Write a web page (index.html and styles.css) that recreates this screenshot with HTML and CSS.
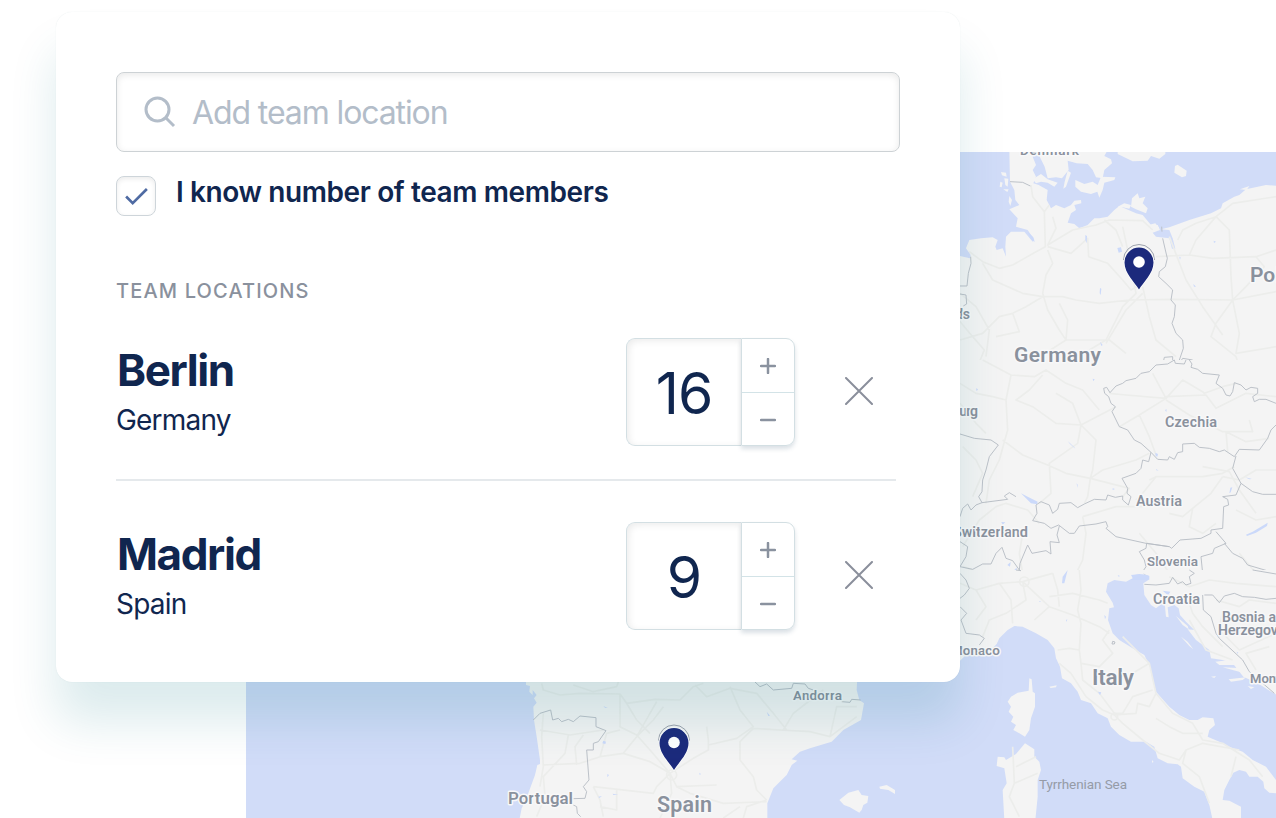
FILE: index.html
```html
<!DOCTYPE html>
<html lang="en">
<head>
<meta charset="utf-8">
<title>Team locations</title>
<link rel="stylesheet" href="styles.css">
</head>
<body>
<main class="stage">
  <svg class="map" viewBox="246 152 1030 666" role="img" aria-label="Map of Europe">
    <!-- North: Denmark, Germany, Poland -->
    <g transform="translate(956 150) scale(.33333)">
      <g class="land">
        <path d="M160 0L162 95L175 120L178 150L190 165L160 178L185 205L180 230L215 240L235 270L230 275L205 245L165 245L150 260L148 290L150 320L140 295L122 300L118 290L125 270L110 262L75 265L40 270L30 295L44 315L42 325L12 318L0 318V670H970V108L930 105L870 118L850 135L835 140L800 160L795 175L765 190L700 210L640 232L615 238L640 240L650 265L658 296L648 296L640 265L600 260L590 248L612 240L605 225L585 225L560 195L540 190L490 168L475 180L455 200L430 205L415 205L395 225L370 235L355 222L335 218L345 190L360 180L355 165L376 160L375 150L355 152L345 165L325 175L300 165L285 175L272 150L275 120L248 105L232 100L240 80L230 60L240 45L230 20L238 0Z"/>
        <path d="M245 0L252 22L266 50L275 85L300 82L318 85L338 60L335 32L362 40L395 42L410 60L420 82L440 85L445 60L468 40L465 28L445 18L455 0Z"/>
        <path d="M230 88L255 72L275 88L305 98L295 110L275 98L255 95L240 100ZM335 62L345 68L330 110L322 116L326 95ZM358 90L385 102L410 95L425 105L435 80L478 82L475 90L445 98L440 120L430 143L424 125L405 132L375 125L358 110ZM657 48L665 44L692 62L690 78L678 82L655 68ZM485 12L530 34L575 32L585 18L610 26L628 12V0H485ZM528 145L545 130L550 145L568 140L560 160L575 175L570 190L540 178L525 170ZM485 170L505 160L525 165L520 176L500 172ZM135 66L150 68L152 80L138 76ZM145 85L157 86L155 110L148 105ZM133 95L140 98L137 112L131 110ZM142 118L158 118L154 126ZM160 138L168 150L163 168L158 155ZM580 224L598 220L610 235L595 240ZM852 118L880 108L872 120Z"/>
      </g>
      <g class="road">
        <path d="M225 105L230 140L265 185L268 290L232 310L170 345L130 355L80 335L40 305M265 185L280 165M290 200L300 235L275 285L350 240L420 225L460 210L560 212L590 240M275 290L345 310L395 265L398 320L455 340L500 390L525 420L560 400M275 300L290 340L270 375L260 430L275 480L310 540L330 570L460 570L510 610M80 340L110 390L200 430L260 440L320 440L360 450L430 460L520 450L650 448L830 450L960 425M260 440L210 470L170 490L130 500L80 550L12 570M170 490L190 545L120 560M12 430L60 470L100 540L90 620M445 210L480 240L500 290M500 230L515 300L540 430L500 470L450 570L400 600M560 410L580 500L600 570L660 620M600 320L700 315L770 325L900 320L960 300M665 270L680 240L720 220L780 200L830 160L960 140M780 200L820 240L825 380L830 450L780 520L765 560L840 620L850 650M640 260L690 390L740 470L800 555M700 315L720 270L780 200M900 320L925 350L870 410L830 450M830 450L850 550L840 610L960 590M0 500L50 560L85 600L60 660M310 460L335 510L330 570L220 640M560 430L510 480L450 580"/>
      </g>
      <g class="border">
        <path d="M162 95L200 97L223 108M617 230L618 245M620 265L628 300L634 325L628 350L610 365L608 380L630 400L650 420L645 450L658 465L655 500L648 520L660 550L680 570L682 595L665 645M12 408L33 408L37 370L45 340L44 320M12 432L30 435L32 462L22 468M580 660L620 645L625 622L650 620L650 640L670 640L680 625L710 630L720 650L750 660"/>
      </g>
      <g class="water"><path d="M484 294L495 292L498 305L488 308ZM388 255L393 258L392 280L388 270ZM432 414L436 416L434 435L431 430ZM773 272L780 275L774 279ZM670 320L674 322L672 330ZM712 402L720 410L714 410ZM432 575L440 585L436 588ZM215 245L232 262L236 276L225 268Z"/></g>
    </g>
    <!-- Middle: Alps, Czechia, Austria -->
    <g transform="translate(956 360) scale(.33333)">
      <path class="land" d="M0 0H970V660H0Z"/>
      <g class="road">
        <path d="M80 0L165 45L150 120L155 210L130 300L100 360L90 430M165 45L235 50L270 30L330 70L380 90L430 150M260 45L220 90L180 120L230 140L300 190L375 195L480 140M300 100L350 130L375 195L420 240L410 330L403 355L330 340L275 315L200 285L140 240M375 195L365 250L280 310L285 400L250 430M403 355L440 330L540 300L580 280M403 355L520 385L500 410M403 355L395 410L385 430M460 100L510 105L630 115L680 60L740 95L745 100L800 80L840 70M630 115L550 165L490 200M630 115L590 40M630 120L700 165L800 215L890 215L880 180M810 215L815 275M630 110L750 105L780 145L870 100L960 110M550 165L580 230L600 285M810 215L870 245L940 235M580 360L600 350L740 350L800 340L835 320M800 350L765 400L710 445L680 470L640 460M710 445L700 500L740 520L780 490M800 350L850 360L900 330L960 330M600 350L560 400L540 420M380 470L390 520L380 600L350 660M380 470L480 440L560 440M12 70L60 100L110 110L150 120M20 260L60 300L80 340L50 410M120 440L150 430L215 450L250 490M120 440L70 480L20 560M200 520L190 580L200 640M12 130L60 190L90 220M550 520L600 580L640 640L660 660M850 580L900 640M840 450L900 480L960 470M740 320L820 335L850 390L900 460M20 620L80 640L140 650L240 640"/>
      </g>
      <g class="border">
        <path d="M655 0L635 12L600 15L580 35L555 40L540 55L510 62L500 70L480 78L462 98L452 82L443 85L446 100L458 110L465 130L478 140L468 155L490 200L515 210L535 240L555 250L585 277L605 298L635 300L640 290L655 298L665 278L680 275L680 252L715 250L730 262L760 265L790 275L805 270L835 290L850 268L910 270L935 235L945 210L960 195M585 277L578 305L560 300L555 325L540 340L498 355L515 385L513 400L525 410L517 435L500 420L500 408L478 412L455 405L450 420L415 418L385 432L365 443L345 428L310 430L305 448L290 460L280 435L255 425L240 435L243 460L230 482L265 490L285 505L308 495L340 520L355 520L370 498L420 492L450 485L455 500L450 505L480 530L570 550L640 560L647 565L672 540L735 535L765 520L765 510L800 505L803 440L818 435L815 418L800 410L840 405L855 370L830 325L840 288M855 370L890 395L920 403H960M12 222L55 235L105 240L127 255L100 290L90 330L80 360L78 395L68 410L78 428L60 435L45 450L35 432L20 445L12 470M78 428L155 418L145 408L160 398L180 410M12 545L35 560L30 590L12 620L50 628L80 612L105 612L120 580L138 562L150 595L170 602L190 630L192 610L215 555L228 580L270 572L285 582L282 545L310 548L303 525L310 498M572 550L570 565L550 575L565 600L570 620L560 635L580 660M572 550L640 560M700 660L715 635L740 640L735 590L770 580L775 565L810 550L780 515M805 550L830 580L860 595L875 615L960 640M700 0L708 12L705 22L725 28L740 40L790 45L780 70L800 85L810 105L822 108L830 95L835 68L855 75L870 90L885 82L905 85L905 100L890 110L895 125L910 118L930 118L960 130M655 0L658 10L685 12L690 0"/>
      </g>
      <g class="water"><path d="M195 400L215 410L245 425L243 433L225 430L210 415ZM870 524L890 515L935 488L933 498L900 518L873 528ZM820 400L823 383L829 382L824 397ZM868 352L888 357L880 358ZM318 655L330 635L336 634L325 660H318ZM508 660L520 645L550 642L580 645V660ZM335 243L355 262L358 266L342 252ZM598 278L606 282L604 290L599 288ZM136 486L148 487L140 494ZM470 385L477 387L470 390ZM600 327L608 332L601 331ZM627 150L632 148L631 156ZM60 85L66 88L62 94ZM154 615L164 606L162 620ZM175 630L183 622L180 634ZM410 56L416 58L412 64ZM362 370L365 374L364 384Z"/></g>
    </g>
    <!-- South: Italy and the Adriatic -->
    <g transform="translate(956 570) scale(.33333)">
      <path class="sea" d="M0 30H970V750H0Z"/>
      <path class="land" d="M0 0V290L12 272L30 255L100 245L122 222L130 205L155 180L175 168L200 170L240 190L275 210L295 235L300 265L312 290L318 325L345 340L365 365L375 390L405 400L425 430L455 445L465 470L490 495L525 515L570 515L595 530L605 565L635 580L665 583L675 590L680 625L715 650L745 665L760 705L770 750L855 750V710L820 692L800 690L805 660L820 630L832 608L850 600L870 605L880 620L905 620L922 635L925 655L940 668L960 670V630L930 590L890 570L860 545L820 530L790 515L755 500L760 480L777 465L772 445L740 442L725 450L700 450L670 435L640 410L600 365L590 330L582 290L565 255L530 235L490 210L470 190L456 150L460 115L474 112L470 98L450 65L455 40L475 30L510 35L530 25L525 14L560 10L590 22L562 40L565 75L585 105L600 115L625 95L627 110L630 140L638 142L635 112L655 105L668 115L672 135L690 155L715 180L695 178L720 210L760 240L765 265L800 270L830 280L862 320L905 340L970 380V0Z"/>
      <path class="land" d="M220 325L227 328L230 365L237 370V410L225 445L220 480L207 500L190 490L172 480L180 465L165 455L172 440L158 425L165 410L155 395L165 380L185 368L218 362Z"/>
      <path class="land" d="M207 520L235 538L235 560L250 575L255 600L245 630L245 680L238 750H145L140 660L152 640L145 595L122 588L125 560L145 562L150 570L180 552Z"/>
      <path class="land" d="M280 350L302 346L300 352L284 354ZM675 200L695 215L712 238L700 228ZM660 138L695 168L698 178L680 165ZM778 275L820 270L840 285L790 285ZM800 292L860 295L875 312L830 300ZM818 328L870 322L860 330L825 335ZM765 320L780 318L775 324ZM875 348L895 352L885 357ZM588 570L593 576L588 578Z"/>
      <g class="road">
        <path d="M12 40L60 60L130 40L200 35L290 10M130 40L165 90L170 160M200 35L280 110L350 135L430 170L460 190M200 35L210 90L150 130L100 150L80 200M290 10L305 60L310 110M370 0L375 60L365 120L375 160L370 240L340 235L305 240M280 80L350 70L430 90L455 100M370 240L375 280L430 290L470 250L440 210L460 180M375 280L380 330L430 370L475 430L500 430L530 380L590 360M310 280L345 310L390 380L440 420L475 435L500 460L560 510L610 550L670 570L690 540L740 520L850 540M475 435L540 430L545 400L580 410L600 370M580 280L600 370L650 430L710 460L740 510L800 520L880 570L920 620M690 540L680 580L730 620L760 700M840 560L825 620M600 445L640 470L680 490L740 490M500 200L580 280L530 310M170 530L175 640L160 680L190 740M240 560L180 590M245 610L175 640M235 150L280 110M60 60L90 110L60 150M640 20L700 50L760 30L840 40L960 50M690 70L710 130L740 170L800 230M780 90L850 110L880 90L960 100M800 120L790 180L850 240L960 190M900 300L870 250L940 230M700 150L750 240L830 270"/>
        <circle cx="205" cy="35" r="14"/><circle cx="475" cy="440" r="10"/>
      </g>
      <g class="border">
        <path d="M12 10L30 30L40 55L25 75L12 85M12 110L32 130L15 150L30 190L70 195L85 205L70 225M565 43L600 45L640 40L650 22L665 42L680 35L690 45L705 40L700 20L715 10L700 0M740 75L742 120L765 140L780 190L790 205L860 270L880 305L955 370M745 75L770 75L790 98L805 78L835 70L860 80L895 82L930 88L960 85M890 0L960 12M468 222L470 214L477 216L475 222ZM180 0L195 2"/>
      </g>
      <g class="water"><path d="M318 40L320 20L335 0L325 40ZM445 135L450 140L447 148ZM426 365L436 367L432 376ZM250 93L256 94L250 96ZM330 150L334 148L331 156ZM485 15L492 18L488 20ZM620 62L643 65L636 76ZM842 245L847 248L844 251Z"/></g>
    </g>
    <!-- Iberia -->
    <g transform="translate(490 670) scale(.33333)">
      <path class="land" d="M108 0V45L120 48L118 65L128 75V60L140 75L132 85L140 98L130 110L132 150L140 200L150 270L150 282L142 285L135 315L115 370L105 395L95 415L88 450H832V400L850 355L890 315L905 285L922 272L905 268L930 245L960 235L1025 215L1060 180L1113 150L1122 100L1108 90L1100 60L1103 0Z"/>
      <path class="land" d="M1048 390L1075 368L1105 360L1115 375L1135 378L1132 398L1120 405L1115 420L1108 428L1080 412L1062 405ZM1168 350L1190 345L1215 360V372L1195 360L1170 356Z"/>
      <g class="road">
        <path d="M155 40L160 60L210 75L270 70L390 72L410 100L495 88L570 90L610 50L640 40M250 45L310 65L380 50L385 36M390 72L390 170L440 195L480 240L540 310L500 350L490 370L310 350M410 100L440 150L480 190M390 180L350 190L330 260L270 280L160 285M150 180L240 195L340 180M235 195L225 250L160 320L165 380L140 440M160 130L155 200L160 290L150 350M260 285L255 230L280 195M330 260L400 250L480 275L540 310M440 200L490 150L520 110M500 95L440 200L400 250M540 310L610 265L655 240L655 210L650 170M655 225L740 205L790 170L750 120L720 50M720 55L650 80L615 45M790 175L750 215L750 270L790 320L800 360L830 390M790 175L870 180L960 185L1020 200L1100 140M880 180L910 130L1000 60M540 310L560 350L600 370L700 400L830 395M560 350L680 345M540 310L545 370L510 444M330 410L380 420L380 360M720 55L800 70L850 130L890 180M1020 200L1040 110L1100 110M750 410L700 444M830 390L770 410L760 444M340 440L330 390L310 350"/>
        <circle cx="545" cy="315" r="15"/>
      </g>
      <g class="border">
        <path d="M130 150L150 130L182 120L188 150L205 145L215 155L235 148L250 155L270 138L318 143L318 170L348 182L325 215L310 220L310 240L290 240L297 330L280 350L290 365L285 385L250 386M250 405L260 410L262 430L272 440M795 36L810 50L830 42L850 60L905 55L910 40L945 42L955 55L970 60M1055 95L1080 97L1085 88L1112 90"/>
      </g>
      <g class="water"><path d="M340 212L348 215L346 222L337 220ZM830 125L840 137L835 138ZM352 312L357 315L352 322ZM368 371L385 374L370 375ZM628 308L633 312L629 315ZM340 108L353 114L345 113ZM325 380L336 378L328 384Z"/></g>
    </g>

    <g class="label">
      <text x="1020" y="154.500" font-size="13.500" textLength="59">Denmark</text>
      <text x="1014" y="362" font-size="21" textLength="87">Germany</text>
      <text x="1250" y="282" font-size="21">Poland</text>
      <text x="948" y="319" font-size="14" textLength="22">nds</text>
      <text x="922" y="416" font-size="14" textLength="56">xembourg</text>
      <text x="1165" y="427" font-size="14.500" textLength="52">Czechia</text>
      <text x="1136" y="506" font-size="14.500" textLength="46">Austria</text>
      <text x="953" y="537" font-size="14.500" textLength="75">Switzerland</text>
      <text x="1147" y="566" font-size="13.500" textLength="51">Slovenia</text>
      <text x="1153" y="604" font-size="14.500" textLength="47">Croatia</text>
      <text font-size="14"><tspan x="1222" y="622">Bosnia and</tspan><tspan x="1218" y="635">Herzegovina</tspan></text>
      <text x="951" y="655" font-size="13.500" textLength="49">Monaco</text>
      <text x="1092" y="685" font-size="22.500" textLength="42">Italy</text>
      <text x="1250" y="683" font-size="13">Montenegro</text>
      <text x="793" y="700" font-size="13.500" textLength="49">Andorra</text>
      <text x="508" y="804" font-size="17" textLength="65">Portugal</text>
      <text x="657" y="812" font-size="21.500" textLength="55">Spain</text>
      <text class="label-sea" x="1039" y="789" font-size="13.500" textLength="88">Tyrrhenian Sea</text>
    </g>

    <defs>
      <g id="pin">
        <path class="pin-ring" d="M-15.500-25A15.500 15.500 0 0 1 15.500-25"/>
        <path class="pin-body" d="M0 0C-4-7-14.500-16-14.500-27A14.500 15 0 0 1 14.500-27C14.500-16 4-7 0 0Z"/>
        <circle class="pin-hole" cy="-27.500" r="5.800"/>
      </g>
    </defs>
    <use href="#pin" x="1139" y="289.500"/>
    <use href="#pin" x="674" y="770"/>
  </svg>

  <section class="card">
    <div class="search">
      <svg class="search-icon" viewBox="0 0 32 32"><circle cx="13.500" cy="13.500" r="11.500"/><path d="M22 22L30 30"/></svg>
      <span class="search-text">Add team location</span>
    </div>
    <div class="check">
      <span class="check-box"><svg class="check-icon" viewBox="0 0 24 18"><path d="M1 9L8 16L23 1"/></svg></span>
      <span class="check-text">I know number of team members</span>
    </div>
    <h2 class="heading">TEAM LOCATIONS</h2>
    <div class="list">
      <div class="row">
        <div class="place"><div class="city">Berlin</div><div class="country">Germany</div></div>
        <div class="stepper">
          <div class="value">16</div>
          <div class="buttons">
            <div class="button"><svg class="sign" viewBox="0 0 16 16"><path d="M1 8H15M8 1V15"/></svg></div>
            <div class="button"><svg class="sign" viewBox="0 0 16 16"><path d="M1 8H15"/></svg></div>
          </div>
        </div>
        <svg class="remove" viewBox="0 0 28 28"><path d="M1 1L27 27M27 1L1 27"/></svg>
      </div>
      <div class="row">
        <div class="place"><div class="city">Madrid</div><div class="country">Spain</div></div>
        <div class="stepper">
          <div class="value">9</div>
          <div class="buttons">
            <div class="button"><svg class="sign" viewBox="0 0 16 16"><path d="M1 8H15M8 1V15"/></svg></div>
            <div class="button"><svg class="sign" viewBox="0 0 16 16"><path d="M1 8H15"/></svg></div>
          </div>
        </div>
        <svg class="remove" viewBox="0 0 28 28"><path d="M1 1L27 27M27 1L1 27"/></svg>
      </div>
    </div>
  </section>
</main>
</body>
</html>
```
FILE: styles.css
```css
* { box-sizing: border-box; }
body { margin: 0; background: #fff; overflow: hidden; font-family: Inter, "Liberation Sans", sans-serif; color: #10264f; }
.stage { display: grid; width: 1276px; height: 818px; overflow: hidden; }
.map, .card { grid-area: 1 / 1; }
.map { width: 1030px; height: 666px; margin: 152px 0 0 246px; background: #d1dcf8; }
.land { fill: #f4f4f4; }
.sea { fill: #d1dcf8; }
.water { fill: #cbd9fa; }
.road { fill: none; stroke: #ecedeb; stroke-width: 5; stroke-linejoin: round; }
.border { fill: none; stroke: #b8bdc5; stroke-width: 2.8; stroke-linejoin: round; }
.label { font-family: Roboto, sans-serif; font-weight: 600; fill: #8a919d; stroke: #f8f8f9; stroke-width: 3px; stroke-linejoin: round; paint-order: stroke; }
.label-sea { font-weight: 400; stroke: none; fill: #959ba6; }
.pin-ring { fill: none; stroke: #9da2ad; stroke-width: 1; transform: translateY(-4.500px); }
.pin-body { fill: #1c2a7c; stroke: #fff; stroke-width: 1.5; paint-order: stroke; }
.pin-hole { fill: #fff; }

.card { z-index: 1; width: 904px; height: 670px; margin: 12px 0 0 56px; padding: 60px; background: #fff; border-radius: 16px; box-shadow: 0 40px 48px rgba(0, 110, 125, .14), 0 0 1px rgba(20, 80, 90, .12); }
.search { display: flex; align-items: center; gap: 16px; height: 80px; padding-left: 27px; border: 1px solid #cdd2d5; border-radius: 8px; box-shadow: inset 0 2px 7px rgba(0, 0, 0, .09); }
.search-icon { width: 32px; height: 32px; fill: none; stroke: #b3bdc9; stroke-width: 3; }
.search-text { padding-top: 1px; font-size: 32px; letter-spacing: -1.1px; color: #b3bdc9; white-space: nowrap; }
.check { display: flex; gap: 20px; margin-top: 24px; height: 40px; }
.check-box { display: grid; place-items: center; width: 40px; height: 40px; border: 1px solid #ced5da; border-radius: 8px; box-shadow: inset 0 2px 5px rgba(0, 0, 0, .08); }
.check-icon { width: 23px; height: 17px; fill: none; stroke: #4f6ba3; stroke-width: 2.8; }
.check-text { font-size: 28px; line-height: 33px; font-weight: 600; letter-spacing: -.4px; white-space: nowrap; }
.heading { margin: 63px 0 0; font-size: 20px; line-height: 24px; font-weight: 500; letter-spacing: 1.15px; color: #8a919d; }
.list { width: 780px; }
.row { display: flex; height: 184px; padding-top: 35px; }
.row:first-child { height: 178px; border-bottom: 2px solid #e5e9ec; }
.row:last-child { padding-top: 41px; }
.place { width: 510px; padding-top: 5px; }
.city { padding-left: 1px; font-size: 44px; line-height: 54px; font-weight: 700; letter-spacing: -1.4px; }
.country { margin-top: 6px; font-size: 28px; line-height: 34px; letter-spacing: -.8px; }
.stepper { display: flex; width: 169px; height: 108px; border-radius: 9px; }
.value { display: flex; align-items: center; justify-content: center; width: 115px; padding-top: 3px; border: 1px solid #d3dfe3; border-right: 0; border-radius: 9px 0 0 9px; box-shadow: inset 2px 2px 7px rgba(0, 0, 0, .08); font-size: 57px; letter-spacing: -1px; }
.buttons { width: 54px; border: 1px solid #d3dfe3; border-radius: 0 9px 9px 0; box-shadow: 0 3px 4px rgba(90, 120, 140, .22); }
.button { display: grid; place-items: center; height: 53px; }
.button + .button { padding-top: 1px; border-top: 1px solid #d3e3e7; }
.sign { width: 16px; height: 16px; fill: none; stroke: #8a929f; stroke-width: 2.5; stroke-linecap: round; }
.remove { width: 28px; height: 28px; margin: 38.500px 0 0 49.500px; fill: none; stroke: #8a8f9b; stroke-width: 2; stroke-linecap: round; }
```
